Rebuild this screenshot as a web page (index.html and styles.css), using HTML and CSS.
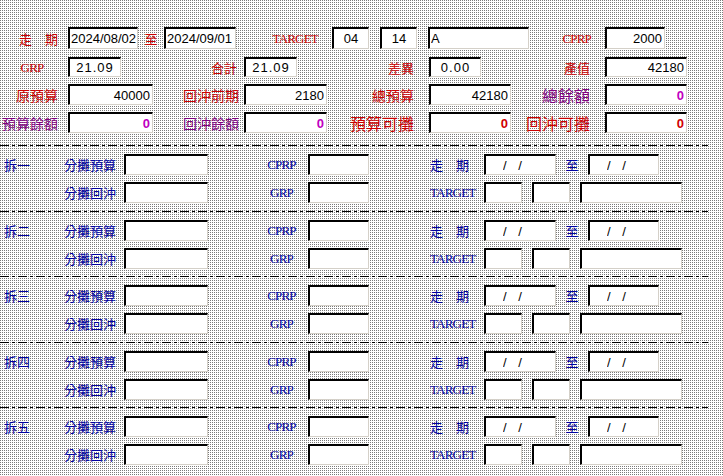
FILE: index.html
```html
<!DOCTYPE html>
<html lang="zh-Hant">
<head>
    <meta charset="UTF-8">
    <title>拆帳</title>
    <link rel="stylesheet" href="styles.css">
</head>
<body>
    <!-- Totals -->
    <section class="top">
        <div class="row r1">
            <span class="lbl red w62 pr4">走　期</span>
            <input class="box w70 ml6" value="2024/08/02" readonly>
            <span class="lbl red w26 center">至</span>
            <input class="box w72" value="2024/09/01" readonly>
            <span class="lbl red latin w96 pr14">TARGET</span>
            <input class="box w37 center" value="04" readonly>
            <input class="box w37 center ml11" value="14" readonly>
            <input class="box w101 ml11" value="A" readonly>
            <span class="lbl red latin w76 pr14">CPRP</span>
            <input class="box w60 right" value="2000" readonly>
        </div>
        <div class="row r2">
            <span class="lbl red latin w68 pr4 center">GRP</span>
            <input class="box w53 center spaced" value="21.09" readonly>
            <span class="lbl red w123 pr7">合計</span>
            <input class="box w53 center spaced" value="21.09" readonly>
            <span class="lbl red w132 pr15">差異</span>
            <input class="box w52 center spaced" value="0.00" readonly>
            <span class="lbl red w124 pr15">產值</span>
            <input class="box w82 right" value="42180" readonly>
        </div>
        <div class="row r3">
            <span class="lbl red s14 w68 pr10">原預算</span>
            <input class="box w85 right" value="40000" readonly>
            <span class="lbl red s14 w91 pr5">回沖前期</span>
            <input class="box w83 right" value="2180" readonly>
            <span class="lbl red s14 w102 pr15">總預算</span>
            <input class="box w82 right" value="42180" readonly>
            <span class="lbl purple s16 w94 pr15">總餘額</span>
            <input class="box w82 right zero-purple" value="0" readonly>
        </div>
        <div class="row r4">
            <span class="lbl purple s14 w68 pr10">預算餘額</span>
            <input class="box w85 right zero-purple" value="0" readonly>
            <span class="lbl purple s14 w91 pr5">回沖餘額</span>
            <input class="box w83 right zero-purple" value="0" readonly>
            <span class="lbl red s16 w102 pr15">預算可攤</span>
            <input class="box w82 right zero-red" value="0" readonly>
            <span class="lbl red s16 w94 pr15">回沖可攤</span>
            <input class="box w82 right zero-red" value="0" readonly>
        </div>
    </section>

    <!-- Splits -->
    <section class="split">
        <span class="lbl blue first">拆一</span>
        <span class="lbl blue name">分攤預算</span>
        <input class="box" readonly>
        <span class="lbl blue latin code">CPRP</span>
        <input class="box" readonly>
        <span class="lbl blue key">走　期</span>
        <div class="dates">
            <input class="box w72 slash" value="/ /" readonly>
            <span class="lbl blue w32 center">至</span>
            <input class="box w71 slash" value="/ /" readonly>
        </div>
        <span class="lbl blue name">分攤回沖</span>
        <input class="box" readonly>
        <span class="lbl blue latin code">GRP</span>
        <input class="box" readonly>
        <span class="lbl blue latin key">TARGET</span>
        <div class="targets">
            <input class="box w38" readonly>
            <input class="box w38" readonly>
            <input class="box w102" readonly>
        </div>
    </section>

    <section class="split">
        <span class="lbl blue first">拆二</span>
        <span class="lbl blue name">分攤預算</span>
        <input class="box" readonly>
        <span class="lbl blue latin code">CPRP</span>
        <input class="box" readonly>
        <span class="lbl blue key">走　期</span>
        <div class="dates">
            <input class="box w72 slash" value="/ /" readonly>
            <span class="lbl blue w32 center">至</span>
            <input class="box w71 slash" value="/ /" readonly>
        </div>
        <span class="lbl blue name">分攤回沖</span>
        <input class="box" readonly>
        <span class="lbl blue latin code">GRP</span>
        <input class="box" readonly>
        <span class="lbl blue latin key">TARGET</span>
        <div class="targets">
            <input class="box w38" readonly>
            <input class="box w38" readonly>
            <input class="box w102" readonly>
        </div>
    </section>

    <section class="split">
        <span class="lbl blue first">拆三</span>
        <span class="lbl blue name">分攤預算</span>
        <input class="box" readonly>
        <span class="lbl blue latin code">CPRP</span>
        <input class="box" readonly>
        <span class="lbl blue key">走　期</span>
        <div class="dates">
            <input class="box w72 slash" value="/ /" readonly>
            <span class="lbl blue w32 center">至</span>
            <input class="box w71 slash" value="/ /" readonly>
        </div>
        <span class="lbl blue name">分攤回沖</span>
        <input class="box" readonly>
        <span class="lbl blue latin code">GRP</span>
        <input class="box" readonly>
        <span class="lbl blue latin key">TARGET</span>
        <div class="targets">
            <input class="box w38" readonly>
            <input class="box w38" readonly>
            <input class="box w102" readonly>
        </div>
    </section>

    <section class="split">
        <span class="lbl blue first">拆四</span>
        <span class="lbl blue name">分攤預算</span>
        <input class="box" readonly>
        <span class="lbl blue latin code">CPRP</span>
        <input class="box" readonly>
        <span class="lbl blue key">走　期</span>
        <div class="dates">
            <input class="box w72 slash" value="/ /" readonly>
            <span class="lbl blue w32 center">至</span>
            <input class="box w71 slash" value="/ /" readonly>
        </div>
        <span class="lbl blue name">分攤回沖</span>
        <input class="box" readonly>
        <span class="lbl blue latin code">GRP</span>
        <input class="box" readonly>
        <span class="lbl blue latin key">TARGET</span>
        <div class="targets">
            <input class="box w38" readonly>
            <input class="box w38" readonly>
            <input class="box w102" readonly>
        </div>
    </section>

    <section class="split">
        <span class="lbl blue first">拆五</span>
        <span class="lbl blue name">分攤預算</span>
        <input class="box" readonly>
        <span class="lbl blue latin code">CPRP</span>
        <input class="box" readonly>
        <span class="lbl blue key">走　期</span>
        <div class="dates">
            <input class="box w72 slash" value="/ /" readonly>
            <span class="lbl blue w32 center">至</span>
            <input class="box w71 slash" value="/ /" readonly>
        </div>
        <span class="lbl blue name">分攤回沖</span>
        <input class="box" readonly>
        <span class="lbl blue latin code">GRP</span>
        <input class="box" readonly>
        <span class="lbl blue latin key">TARGET</span>
        <div class="targets">
            <input class="box w38" readonly>
            <input class="box w38" readonly>
            <input class="box w102" readonly>
        </div>
    </section>
</body>
</html>
```

FILE: styles.css
```css
/* General */
* {
    box-sizing: border-box;
}
html, body {
    margin: 0;
    padding: 0;
    height: 100%;
    overflow: hidden;
}
body {
    width: 723px;
    height: 476px;
    font-family: "Noto Sans CJK TC", "Liberation Sans", sans-serif;
    font-size: 13px;
    /* dithered gray dots, one on every 2x2 cell */
    background-color: #fff;
    background-image:
        repeating-linear-gradient(180deg, transparent 0 1px, #fff 1px 2px),
        repeating-linear-gradient(90deg, #7a7a7a 0 1px, #fff 1px 2px);
}

/* Sunken edit boxes */
.box {
    display: block;
    margin: 0;
    padding: 0 1px;
    height: 21px;
    font-family: "Liberation Sans", sans-serif;
    font-size: 13px;
    color: #000;
    background: #fff;
    border-style: solid;
    border-width: 2px 1px 1px 2px;
    border-color: #000 #d4d0c8 #d4d0c8 #000;
    border-radius: 0;
    outline: none;
}
.box.right { text-align: right; padding-right: 2px; }
.box.center { text-align: center; }
.box.spaced { letter-spacing: 1px; }
.box.slash {
    padding-left: 17px;
    letter-spacing: 4px;
}
.zero-purple {
    color: #c000c0 !important;
    font-weight: bold;
}
.zero-red {
    color: #d00000 !important;
    font-weight: bold;
}

/* Labels */
.lbl {
    display: flex;
    align-items: center;
    justify-content: flex-end;
    white-space: nowrap;
    line-height: 1;
}
.lbl.center { justify-content: center; }
.latin {
    font-family: "Liberation Serif", serif;
    font-size: 13px;
    letter-spacing: -0.8px;
}
.s14 { font-size: 14px; }
.s16 { font-size: 16px; }
.red { color: #cc0000; }
.purple { color: #800080; }
.blue { color: #0000a0; }

/* widths */
.w26 { width: 26px; }
.w32 { width: 32px; }
.w37 { width: 37px; }
.w38 { width: 38px; }
.w52 { width: 52px; }
.w53 { width: 53px; }
.w60 { width: 60px; }
.w62 { width: 62px; }
.w68 { width: 68px; }
.w70 { width: 70px; }
.w71 { width: 71px; }
.w72 { width: 72px; }
.w76 { width: 76px; }
.w82 { width: 82px; }
.w83 { width: 83px; }
.w85 { width: 85px; }
.w91 { width: 91px; }
.w94 { width: 94px; }
.w96 { width: 96px; }
.w101 { width: 101px; }
.w102 { width: 102px; }
.w123 { width: 123px; }
.w124 { width: 124px; }
.w132 { width: 132px; }
.pr4 { padding-right: 4px; }
.pr5 { padding-right: 5px; }
.pr7 { padding-right: 7px; }
.pr10 { padding-right: 10px; }
.pr14 { padding-right: 14px; }
.pr15 { padding-right: 15px; }
.ml6 { margin-left: 6px; }
.ml11 { margin-left: 11px; }

/* Totals block */
.top {
    padding: 27px 0 12px;
    display: flex;
    flex-direction: column;
    gap: 7px;
}
.row {
    display: flex;
    align-items: stretch;
}
.r1 { height: 22px; }
.r1 .box { height: 22px; }
.r2 { margin-top: 1px; height: 20px; }
.r2 .box { height: 20px; }
.r3, .r4 { height: 21px; }

/* Split blocks */
.split {
    display: grid;
    grid-template-columns: 63px 61px 84px 100px 61px 115px auto;
    grid-template-rows: 21px 21px;
    row-gap: 7px;
    padding: 9px 0 8px;
    position: relative;
}
.split:nth-of-type(3), .split:nth-of-type(5) {
    padding-bottom: 7px;
}
.split::before {
    content: '';
    position: absolute;
    top: 0;
    left: 0;
    width: 708px;
    height: 1px;
    background: repeating-linear-gradient(90deg, #000 0 9px, transparent 9px 12px, #000 12px 15px, transparent 15px 18px);
}
.split .first {
    justify-content: flex-start;
    padding-left: 4px;
}
.split .name {
    grid-column: 2;
    padding-right: 8px;
}
.split .box {
    height: 21px;
}
.split .code {
    justify-content: center;
    padding-left: 47px;
}
.split .key {
    justify-content: flex-start;
    padding-left: 61px;
}
.dates, .targets {
    display: flex;
}
.targets {
    gap: 10px;
}
```
